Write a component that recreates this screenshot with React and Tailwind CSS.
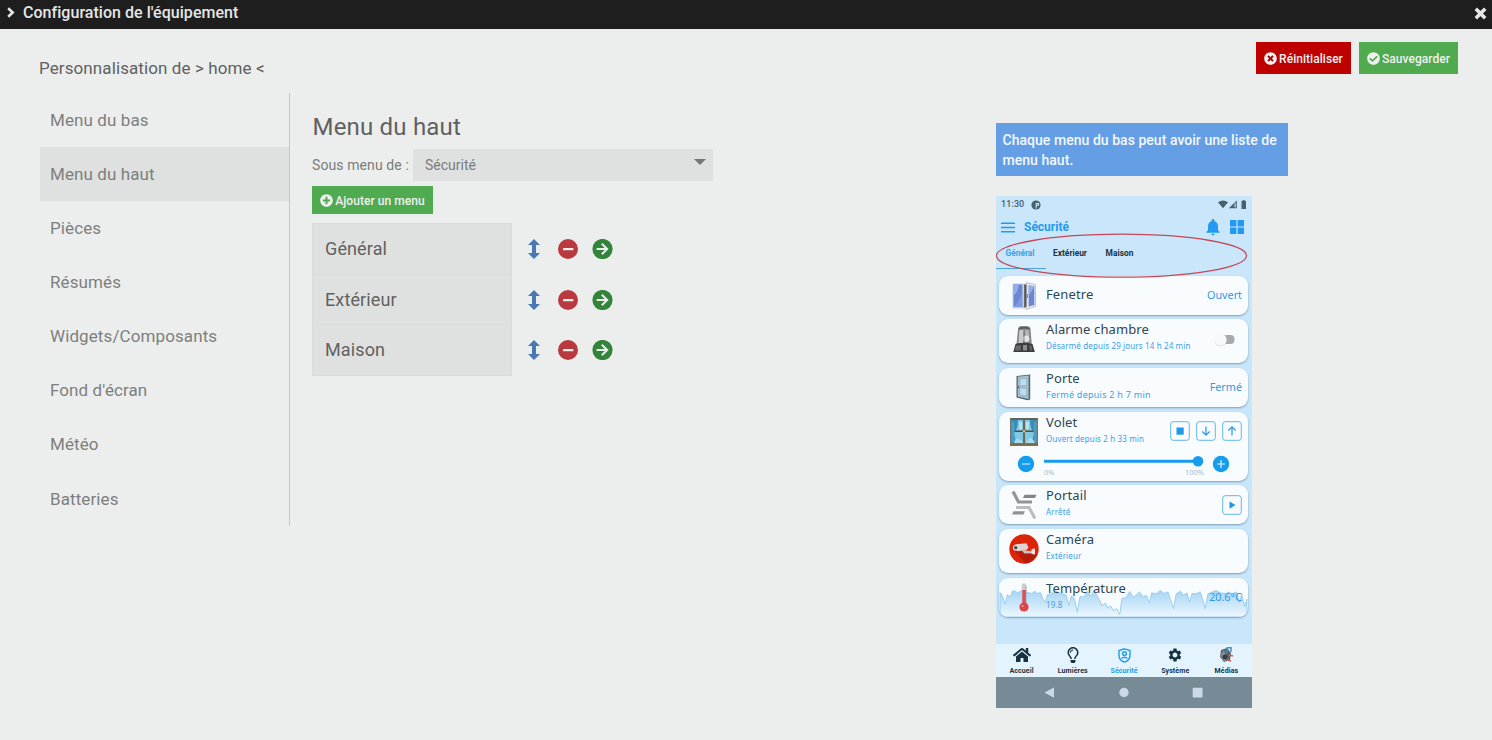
import React from "react";
import { FaTimesCircle, FaCheckCircle, FaPlusCircle, FaHome, FaRegLightbulb } from "react-icons/fa";
import { MdSettings, MdNotifications } from "react-icons/md";

const sections = ["Menu du bas", "Menu du haut", "Pièces", "Résumés", "Widgets/Composants", "Fond d'écran", "Météo", "Batteries"];
const menus = ["Général", "Extérieur", "Maison"];

function MoveIcon() {
  return (
    <svg width="12" height="20" viewBox="0 0 12 20" fill="#4a78b0">
      <path d="M6 0 12 6H8V14H12L6 20 0 14H4V6H0Z" />
    </svg>
  );
}

function RemoveIcon() {
  return (
    <svg width="20" height="20" viewBox="0 0 20 20">
      <circle cx="10" cy="10" r="10" fill="#b9393e" />
      <rect x="5" y="9" width="10.4" height="2.2" rx=".5" fill="#eceeed" />
    </svg>
  );
}

function GoIcon() {
  return (
    <svg width="21" height="20" viewBox="0 0 21 20">
      <circle cx="10.5" cy="10" r="10.1" fill="#31843a" />
      <path d="M4.600 10H15M9.800 4.800 15.200 10 9.800 15.200" fill="none" stroke="#eceeed" strokeWidth="2" />
    </svg>
  );
}

function WindowIcon() {
  return (
    <svg width="24" height="28" viewBox="0 0 24 28">
      <path d="M.5 1.500H14V26.500H.5Z" fill="#c9cfdd" />
      <rect x="1.500" y="2.500" width="8.800" height="22.500" fill="#6a87d6" />
      <path d="M1.500 2.500H7Q6 10 1.500 14Z" fill="#94aeea" />
      <path d="M1.500 25Q8 19 10.300 10V25Z" fill="#7f9ade" />
      <path d="M12.200 2.500H15V24L12.200 26Z" fill="#55544f" />
      <path d="M14.500.5 23.500 2.500V24.500L14.500 27.500Z" fill="#e4e6ec" stroke="#9499a4" strokeWidth=".5" />
      <path d="M16.700 3.300 22.300 4.400V22.900L16.700 24.600Z" fill="#6a87d6" />
      <path d="M16.700 3.300 22.300 4.400 16.700 14Z" fill="#94aeea" />
      <path d="M15.300 12v4" stroke="#777" strokeWidth="1" />
    </svg>
  );
}

function SirenIcon() {
  return (
    <svg width="22" height="28" viewBox="0 0 22 28">
      <path d="M5 4Q6 1.200 8 1h6q2.500.2 3.500 3l1.300 15.500H3.500Z" fill="#85888a" />
      <path d="M6.500 5h4l-.5 13H5.500Z" fill="#c8cbcd" />
      <path d="M12 5h3.500l1 6-4 1Z" fill="#b3b6b8" />
      <path d="M5.500 3.500Q11 2 17 3.500" stroke="#55585a" strokeWidth="1.300" fill="none" />
      <circle cx="13.300" cy="13.800" r="3.200" fill="#e3e5e6" />
      <path d="M11 6v12" stroke="#75787a" strokeWidth=".8" />
      <path d="M.3 27 2.500 19q8.500-2.500 17 0L21.800 27Z" fill="#3a3c3e" />
      <path d="M3 20.500h5l-.5 5H2Z" fill="#686b6d" />
      <path d="M10 20h4v5.500h-4Z" fill="#8b8e90" />
      <path d="M16 20.500h2.500l1 5H17Z" fill="#606365" />
    </svg>
  );
}

function DoorIcon() {
  return (
    <svg className="-ml-[2px]" width="15" height="27" viewBox="0 0 15 27">
      <path d="M.5 2 14.200.5V25.500L11.500 26.300.5 23.500Z" fill="#59646c" />
      <path d="M1.800 2.800 12.600 1.600V25L1.800 22.600Z" fill="#a3c1d5" />
      <path d="M3.800 5 10.800 4.300V11.500L3.800 11.700ZM3.800 14 10.800 14.200V22L3.800 20.800Z" fill="#bfdcec" stroke="#86a4b7" strokeWidth=".6" />
      <path d="M2.700 12v2.200" stroke="#34424c" strokeWidth=".9" />
    </svg>
  );
}

function ShutterIcon() {
  return (
    <svg width="28" height="28" viewBox="0 0 28 28">
      <rect width="28" height="28" fill="#77736a" />
      <rect x="1.700" y="2" width="24.600" height="23" fill="#82c8e2" />
      <path d="M1.700 2H8Q8 11 4 15L6 25H1.700ZM26.300 2H20Q20 11 24 15L22 25H26.300Z" fill="#338fb9" />
      <path d="M3 4v20M25 4v20" stroke="#5eb3d3" strokeWidth="1" />
      <path d="M9 4h3v7H9ZM16 4h3v7h-3Z" fill="#b7e2ef" />
      <path d="M4 25Q6 17 12 23L13 25ZM16 25Q20 15 25 25Z" fill="#a9dbed" />
      <path d="M14 1.500V25M5 13.300H23" stroke="#5a4a2c" strokeWidth="1.500" />
      <path d="M0 1h28" stroke="#5f6464" strokeWidth="2" />
      <path d="M0 26.500h28" stroke="#806a4a" strokeWidth="2" />
      <circle cx="14" cy="13.300" r="1.200" fill="#d6be78" />
    </svg>
  );
}

function GateIcon() {
  return (
    <svg width="26" height="28" viewBox="0 0 26 28" fill="none">
      <path d="M2 .5 7.500 11H21" stroke="#949494" strokeWidth="3.200" />
      <path d="M13.500 3.800H25.500L24 7H12Z" fill="#858585" />
      <path d="M5 16.500H18L24 27.500" stroke="#bdbdbd" strokeWidth="3.200" />
      <path d="M2.500 20.300H14L12.500 23.500H1Z" fill="#929292" />
    </svg>
  );
}

function CameraIcon() {
  return (
    <svg width="30" height="30" viewBox="0 0 30 30">
      <circle cx="15" cy="15" r="14.700" fill="#de2408" />
      <path d="M6 17 16.500 29.500Q24 28 28 20L24 18Z" fill="#b51c0b" />
      <path d="M6 10.300 17.500 9.300 19.500 13.500 17.500 16 8.500 17.200Z" fill="#ddd4d4" />
      <path d="m13 16.800 2.500 2.700 7.500-.3v-2.300l-5.500-.2-1.500-.7Z" fill="#cfc3c3" />
      <path d="m22.500 15 3.500-.5v6L22.500 20Z" fill="#eee2e2" />
      <circle cx="6.800" cy="13.800" r="2.900" fill="#eee8e8" />
      <circle cx="6.800" cy="13.800" r="1.700" fill="#45484c" />
    </svg>
  );
}

function ThermometerIcon() {
  return (
    <svg width="10" height="29" viewBox="0 0 10 29">
      <rect x="2.700" y=".3" width="4.600" height="23" rx="2.300" fill="#c7cfd4" />
      <rect x="3.300" y="7" width="3.600" height="16" fill="#d85357" />
      <circle cx="5" cy="24" r="4.600" fill="#dd444b" />
      <circle cx="3.500" cy="23" r="1" fill="#f2a2a5" />
      <path d="M7 3v17" stroke="#8f8c91" strokeWidth=".6" />
    </svg>
  );
}

function TemperatureChart() {
  return (
    <svg className="absolute inset-0" width="249" height="39" viewBox="27 174 747 118">
      <defs>
        <linearGradient id="fade" x1="0" y1="0" x2="0" y2="1">
          <stop offset="0" stopColor="#a6d5f5" />
          <stop offset="1" stopColor="#eef8fe" />
        </linearGradient>
      </defs>
      <path d="M27 218 34 228 43 254 49 225 58 231 65 213 74 214 79 219 92 213 107 217 123 221 132 214 140 221 149 218 157 238 164 248 170 225 183 221 195 213 205 219 218 222 227 226 235 257 243 228 252 237 261 278 269 230 280 232 291 215 300 228 312 213 323 232 331 247 335 258 346 250 352 264 362 259 370 273 380 267 389 285 396 235 409 234 419 215 430 232 440 225 449 216 461 232 469 226 479 250 486 219 499 222 512 212 524 221 535 216 544 244 552 266 560 222 573 214 582 226 593 219 600 247 608 221 620 222 633 216 640 240 648 266 656 222 668 217 680 212 694 219 710 221 719 217 730 222 743 216 751 249 758 222 767 260 774 238V292H27Z" fill="url(#fade)" stroke="#9accef" strokeWidth="3" />
    </svg>
  );
}

function Card({ icon, title, sub, subClass = "text-[8px] tracking-[0.14px]", tall, chart, center, children, below }) {
  return (
    <div className={`relative flex flex-col overflow-hidden rounded-[9px] bg-[#f8fcff] shadow-[0_1px_2px_#7f9fb3] ${tall}`}>
      {chart}
      <div className="relative flex">
        <div className="flex h-[39px] w-[47px] shrink-0 items-center justify-center pl-[3px]">{icon}</div>
        <div className={center ? "flex-1 pt-[10px]" : "flex-1 pt-[2px]"}>
          <div className="whitespace-nowrap text-[13px] leading-4 tracking-[0.12px] text-[#2d4654]">{title}</div>
          {sub && <div className={`whitespace-nowrap pt-px leading-4 text-[#3d9fe4] ${subClass}`}>{sub}</div>}
        </div>
        <div className="flex h-[38px] items-center gap-[6px] pr-[6px] text-[10.800px] text-[#3298e4]">{children}</div>
      </div>
      {below}
    </div>
  );
}

function Control({ children }) {
  return (
    <svg width="20" height="20" viewBox="0 0 20 20" fill="none">
      <rect x=".7" y=".7" width="18.600" height="18.600" rx="2.500" stroke="#62b4e9" strokeWidth="1" />
      {children}
    </svg>
  );
}

function Tab({ icon, label, active }) {
  return (
    <div className={`flex flex-1 flex-col items-center ${active ? "text-[#229be9]" : "text-[#17323f]"}`}>
      <div className="flex h-[22px] items-center justify-center">{icon}</div>
      <div className="text-[7px] font-bold leading-[11px] tracking-[0.1px]">{label}</div>
    </div>
  );
}

function Phone() {
  return (
    <div className="relative flex h-[512px] w-[256px] flex-col bg-[#c9e6fb]">
      <div className="flex h-[17px] items-center pl-[5px] pr-[5px] text-[#48616f]">
        <span className="text-[9px] font-medium tracking-[0.1px]">11:30</span>
        <svg className="ml-[7px]" width="10" height="10" viewBox="0 0 10 10">
          <circle cx="5" cy="5" r="4.600" fill="currentColor" />
          <path d="M5.200 8.500V3.500h2.300v1.800H5.800" fill="none" stroke="#c9e6fb" strokeWidth="1.100" />
        </svg>
        <svg className="ml-auto" width="29" height="9" viewBox="0 0 29 9" fill="currentColor">
          <path d="M0 2.200Q5-1.400 10 2.200L5 8.300Z" />
          <path d="M18.800 .6V8.300h-8Z" />
          <path d="M16.300 4V7.300h1.700V2.500Z" fill="#a3bccb" />
          <path d="M23.500 1h1.200V0h2v1h1.300v8h-4.500Z" />
        </svg>
      </div>
      <div className="flex h-[28px] items-center pl-[5px] pr-[8px] text-[#239aef]">
        <svg width="14" height="11" viewBox="0 0 14 11" stroke="currentColor" strokeWidth="1.400">
          <path d="M0 1.200H14M0 5.500H14M0 9.800H14" />
        </svg>
        <span className="ml-[9px] text-[12px] font-bold">Sécurité</span>
        <MdNotifications className="ml-auto" size={20} />
        <svg className="ml-[7px]" width="14" height="14" viewBox="0 0 14 14" fill="currentColor">
          <path d="M0 0h6.400v6.400H0ZM7.600 0H14v6.400H7.600ZM0 7.600h6.400V14H0ZM7.600 7.600H14V14H7.600Z" />
        </svg>
      </div>
      <div className="flex h-[28px] text-[8.400px] font-bold leading-[25px] text-[#1e3443]">
        <div className="w-[50px] border-b border-[#48a5e2] pr-[2px] text-center text-[#35a4ed]">Général</div>
        <div className="w-[48px] text-center">Extérieur</div>
        <div className="w-[51px] text-center">Maison</div>
      </div>
      <svg className="absolute left-0 top-[37px] z-10" width="256" height="46" viewBox="0 0 256 46">
        <ellipse cx="125.500" cy="22.700" rx="125" ry="21.500" fill="none" stroke="#c44858" strokeWidth="1.300" />
      </svg>
      <div className="flex flex-col pl-[3px] pr-1 pt-[7px] font-['Noto_Sans',sans-serif]">
        <Card tall="h-[39px]" center icon={<WindowIcon />} title="Fenetre">Ouvert</Card>
        <Card tall="h-[44px] mt-1" icon={<SirenIcon />} title="Alarme chambre" sub="Désarmé depuis 29 jours 14 h 24 min">
          <svg className="mr-[7px] mt-[3px]" width="21" height="14" viewBox="0 0 21 14">
            <rect x="5" y="2" width="15.500" height="9" rx="4" fill="#a8abad" />
            <circle cx="6.500" cy="7.500" r="6" fill="#d5d9dc" />
            <circle cx="6.500" cy="6.700" r="6" fill="#f8f9fb" />
          </svg>
        </Card>
        <Card tall="h-[39px] mt-[5px]" icon={<DoorIcon />} title="Porte" sub="Fermé depuis 2 h 7 min" subClass="text-[9px] tracking-[0.26px]">Fermé</Card>
        <Card
          tall="h-[69px] mt-[5px]"
          icon={<ShutterIcon />}
          title="Volet"
          sub="Ouvert depuis 2 h 33 min"
          below={
            <div className="flex pl-[18px] pt-[4px]">
              <svg width="18" height="18" viewBox="0 0 18 18">
                <circle cx="9" cy="9" r="8.200" fill="#149ced" />
                <path d="M5 9h8" stroke="#e6f6ff" strokeWidth="1.200" />
              </svg>
              <div className="ml-[9px] w-[160px]">
                <svg width="160" height="12" viewBox="0 0 160 12">
                  <path d="M0 6.300H155" stroke="#149ced" strokeWidth="3" />
                  <circle cx="154" cy="6.300" r="5.300" fill="#149ced" />
                </svg>
                <div className="flex justify-between text-[7.500px] leading-[11px] text-[#a7bdc9]">
                  <span>0%</span>
                  <span>100%</span>
                </div>
              </div>
              <svg className="ml-[8px]" width="18" height="18" viewBox="0 0 18 18">
                <circle cx="9" cy="9" r="8.200" fill="#149ced" />
                <path d="M5 9h8M9 5v8" stroke="#e6f6ff" strokeWidth="1.200" />
              </svg>
            </div>
          }
        >
          <Control><rect x="6.500" y="6.500" width="7.200" height="7.200" fill="#2198e6" /></Control>
          <Control><path d="M10 5.500V14M6.300 10.500 10 14l3.700-3.500" stroke="#379ee4" strokeWidth="1.300" /></Control>
          <Control><path d="M10 14.500V6M6.300 9.500 10 6l3.700 3.500" stroke="#379ee4" strokeWidth="1.300" /></Control>
        </Card>
        <Card tall="h-[39px] mt-1" icon={<GateIcon />} title="Portail" sub="Arrêté">
          <div className="mt-[2px]">
            <Control><path d="M7.500 6.500v7.200l6-3.600Z" fill="#2198e6" /></Control>
          </div>
        </Card>
        <Card tall="h-[44px] mt-[5px]" icon={<CameraIcon />} title="Caméra" sub="Extérieur" />
        <Card tall="h-[39px] mt-[5px]" icon={<ThermometerIcon />} title="Température" sub="19.8" chart={<TemperatureChart />}>20.6°C</Card>
      </div>
      <div className="mt-auto flex h-[33px] bg-[#e3f4ff]">
        <Tab label="Accueil" icon={<FaHome size={18} />} />
        <Tab label="Lumières" icon={<FaRegLightbulb size={16} />} />
        <Tab
          label="Sécurité"
          active
          icon={
            <svg width="13" height="15" viewBox="0 0 13 15" fill="none" stroke="currentColor" strokeWidth="1.400">
              <path d="M6.500.8 12 2.600v4.600c0 3.500-2 5.800-5.500 7C3 13 1 10.700 1 7.200V2.600Z" />
              <circle cx="6.500" cy="5.600" r="1.900" />
              <path d="M3.500 10.500q3-2.700 6 0" />
            </svg>
          }
        />
        <Tab label="Système" icon={<MdSettings size={16} />} />
        <Tab
          label="Médias"
          icon={
            <svg width="15" height="16" viewBox="0 0 15 16">
              <path d="m2 3 6-2 4 5-1 7-6 2-4-5Z" fill="#596269" />
              <path d="m1 8 4-5 4 9-4 3Z" fill="#858d94" />
              <circle cx="6" cy="10" r="2.500" fill="#343b42" />
              <path d="M8 6V1l4-.5V5" stroke="#438ece" strokeWidth="1.500" fill="none" />
              <path d="m10 8 4 1M9 13l3 1" stroke="#cc604e" strokeWidth="1.500" />
            </svg>
          }
        />
      </div>
      <div className="flex h-[31px] items-center bg-[#778b97]">
        <svg width="256" height="31" viewBox="0 0 256 31" fill="#cbd9e4">
          <path d="M58 10.500v10.200l-9.500-5.100Z" />
          <circle cx="128" cy="15.500" r="4.700" />
          <rect x="196.700" y="10.700" width="9.800" height="9.800" rx=".7" />
        </svg>
      </div>
    </div>
  );
}

export default function App() {
  return (
    <div className="h-[740px] w-[1492px] overflow-hidden bg-[#eceeed] font-[Roboto,sans-serif] text-[#5f6160]">
      <header className="flex h-[29px] items-center bg-[#1e1e1e] pb-1 pl-[7px] pr-[5px] text-[#e6e6e6]">
        <svg width="8" height="11" viewBox="0 0 8 11" fill="none" stroke="currentColor" strokeWidth="2.600">
          <path d="M1.200 1.200 5.700 5.500 1.200 9.800" />
        </svg>
        <h1 className="ml-2 text-[16px] font-medium leading-5 tracking-[0.040px]">Configuration de l'équipement</h1>
        <svg className="ml-auto mt-[1px]" width="13" height="13" viewBox="0 0 13 13" fill="none" stroke="currentColor" strokeWidth="3.600">
          <path d="M1.800 1.800 11.200 11.200M11.200 1.800 1.800 11.200" />
        </svg>
      </header>

      <div className="flex h-16 justify-between pl-[39px] pr-[34px] pt-[13px]">
        <div className="pt-[14px] text-[17px] leading-6 tracking-[0.1px]">Personnalisation de &gt; home &lt;</div>
        <div className="flex gap-2 text-[12px] font-medium text-[#f0f0f0]">
          <button className="flex h-8 w-[95px] items-center justify-center gap-[2px] bg-[#be0000] pt-px tracking-[0.04px]">
            <FaTimesCircle size={13} />
            Réinitialiser
          </button>
          <button className="flex h-8 w-[99px] items-center justify-center gap-[2px] bg-[#50aa50] pt-px tracking-[0.04px]">
            <FaCheckCircle size={13} />
            Sauvegarder
          </button>
        </div>
      </div>

      <div className="flex items-start pl-10">
        <nav className="h-[433px] w-[250px] border-r border-[#c5c7c6] text-[17px] text-[#7d7f7e]">
          {sections.map((name, i) => (
            <div key={name} className={`flex h-[54.120px] items-center pl-[10px] pt-px tracking-[0.100px] ${i === 1 ? "bg-[#dfe1e0]" : ""}`}>
              {name}
            </div>
          ))}
        </nav>

        <main className="w-[706px] pl-[22px] pt-[18px]">
          <h2 className="pl-[0.500px] text-[24px] leading-[32px] tracking-[0.2px]">Menu du haut</h2>
          <div className="mt-[6px] flex h-8 items-center text-[14px] text-[#7a7c7b]">
            <div className="w-[101px] whitespace-nowrap tracking-[0.1px]">Sous menu de :</div>
            <div className="flex h-8 w-[300px] justify-between bg-[#dfe1e0] pl-3 pr-[7px] leading-8">
              Sécurité
              <svg className="mt-[10px]" width="12" height="6" viewBox="0 0 12 6" fill="#757776">
                <path d="M0 0h12L6 6Z" />
              </svg>
            </div>
          </div>
          <button className="mt-[5px] flex h-7 w-[121px] items-center justify-center gap-[2px] bg-[#50aa50] pt-px text-[12px] font-medium tracking-[0.06px] text-[#f0f0f0]">
            <FaPlusCircle size={13} />
            Ajouter un menu
          </button>
          <div className="mt-[9px] flex">
            <ul className="w-[200px] border border-[#d9dbda] bg-[#dfe1e0] text-[18px]">
              {menus.map((name, i) => (
                <li key={name} className={`flex items-center pl-3 tracking-[0.12px] ${i < 2 ? "h-[50.500px] border-b border-[#dadcdb]" : "h-[50px] pb-[2px]"}`}>
                  {name}
                </li>
              ))}
            </ul>
            <div className="flex flex-col gap-[30.500px] pl-4 pt-4">
              {menus.map((name) => (
                <div key={name} className="flex h-5 items-center">
                  <MoveIcon />
                  <span className="ml-[18px]"><RemoveIcon /></span>
                  <span className="ml-[14px]"><GoIcon /></span>
                </div>
              ))}
            </div>
          </div>
        </main>

        <aside className="w-[292px] pt-[30px]">
          <div className="h-[53px] w-[292px] bg-[#649fe6] pl-[6.500px] pt-[7px] text-[14px] font-medium leading-5 tracking-[0.04px] text-[#f3f7fc]">
            Chaque menu du bas peut avoir une liste de menu haut.
          </div>
          <div className="mt-5">
            <Phone />
          </div>
        </aside>
      </div>
    </div>
  );
}
